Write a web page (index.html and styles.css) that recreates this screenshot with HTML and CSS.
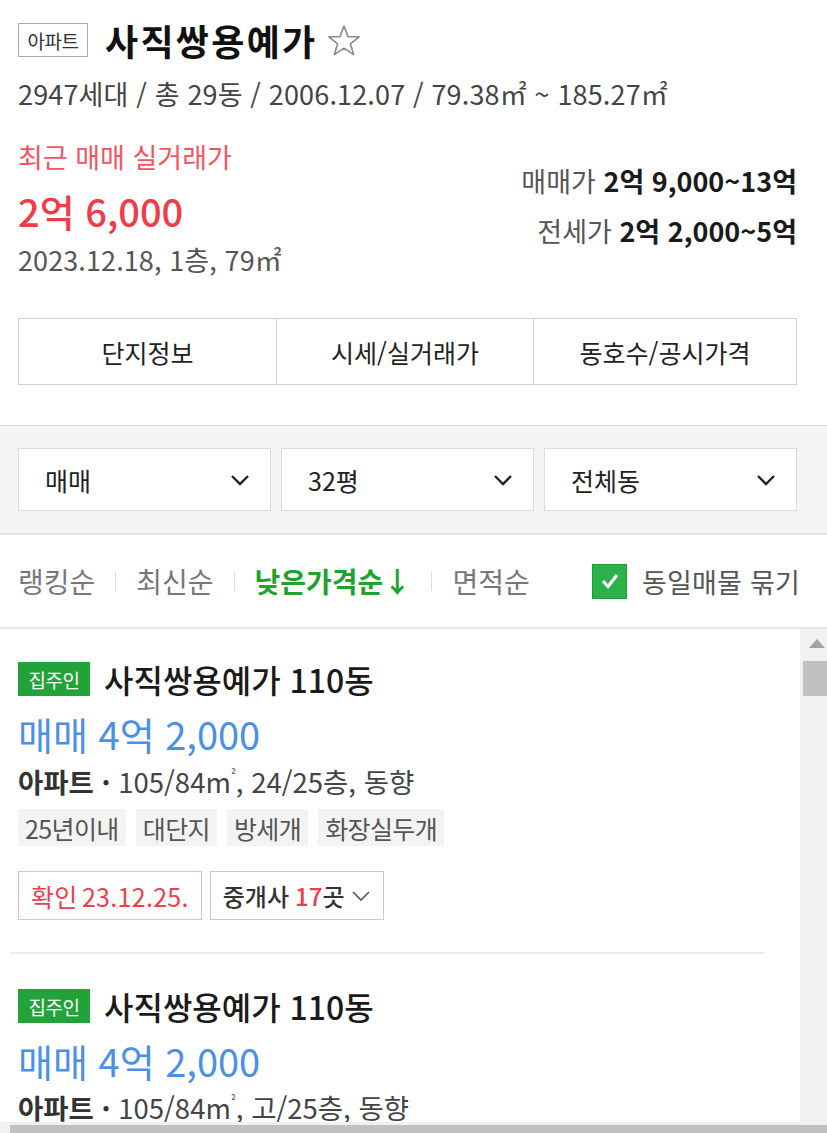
FILE: index.html
```html
<!DOCTYPE html>
<html lang="ko">
<head>
<meta charset="utf-8">
<link rel="stylesheet" href="styles.css">
</head>
<body>
<div class="page">
  <header class="head">
    <div class="title-row">
      <span class="type-badge">아파트</span>
      <h1 class="title">사직쌍용예가</h1>
      <svg class="star" width="34" height="32" viewBox="0 0 34 32"><polygon points="17,2 21,12.6 32.2,12.8 23.4,19.8 26.6,30.6 17,24.2 7.4,30.6 10.6,19.8 1.8,12.8 13,12.6" fill="none" stroke="#8a8a8a" stroke-width="1.6" stroke-linejoin="round"/></svg>
    </div>
    <div class="meta">2947세대 / 총 29동 / 2006.12.07 / 79.38㎡ ~ 185.27㎡</div>
    <div class="price-area">
      <div class="recent">
        <div class="recent-label">최근 매매 실거래가</div>
        <div class="recent-price">2억 6,000</div>
        <div class="recent-date">2023.12.18, 1층, 79㎡</div>
      </div>
      <div class="ranges">
        <div class="range"><span class="range-label">매매가</span> <b>2억 9,000~13억</b></div>
        <div class="range"><span class="range-label">전세가</span> <b>2억 2,000~5억</b></div>
      </div>
    </div>
    <div class="tabs">
      <div class="tab">단지정보</div>
      <div class="tab">시세/실거래가</div>
      <div class="tab">동호수/공시가격</div>
    </div>
  </header>

  <section class="filters">
    <div class="select"><span>매매</span><svg class="chev" width="20" height="12" viewBox="0 0 20 12"><polyline points="2,2 10,10 18,2" fill="none" stroke="#222" stroke-width="2.4"/></svg></div>
    <div class="select"><span>32평</span><svg class="chev" width="20" height="12" viewBox="0 0 20 12"><polyline points="2,2 10,10 18,2" fill="none" stroke="#222" stroke-width="2.4"/></svg></div>
    <div class="select"><span>전체동</span><svg class="chev" width="20" height="12" viewBox="0 0 20 12"><polyline points="2,2 10,10 18,2" fill="none" stroke="#222" stroke-width="2.4"/></svg></div>
  </section>

  <nav class="sortbar">
    <div class="sorts">
      <span class="sort">랭킹순</span>
      <span class="sep"></span>
      <span class="sort">최신순</span>
      <span class="sep"></span>
      <span class="sort active">낮은가격순↓</span>
      <span class="sep"></span>
      <span class="sort">면적순</span>
    </div>
    <label class="group">
      <span class="check"><svg width="22" height="20" viewBox="0 0 22 20"><polyline points="4,10 9,15.5 18,4" fill="none" stroke="#fff" stroke-width="3.2"/></svg></span>
      <span>동일매물 묶기</span>
    </label>
  </nav>

  <div class="list">
    <div class="items">
      <article class="item">
        <div class="item-title"><span class="owner">집주인</span><span class="name">사직쌍용예가 110동</span></div>
        <div class="item-price">매매 4억 2,000</div>
        <div class="item-info"><b>아파트 ·</b> 105/84m<sup>²</sup>, 24/25층, 동향</div>
        <div class="tags">
          <span class="tag">25년이내</span>
          <span class="tag">대단지</span>
          <span class="tag">방세개</span>
          <span class="tag">화장실두개</span>
        </div>
        <div class="actions">
          <span class="confirm">확인 23.12.25.</span>
          <span class="agents">중개사 <em>17</em>곳 <svg width="20" height="12" viewBox="0 0 20 12"><polyline points="2,2 10,10 18,2" fill="none" stroke="#555" stroke-width="1.6"/></svg></span>
        </div>
      </article>
      <article class="item">
        <div class="item-title"><span class="owner">집주인</span><span class="name">사직쌍용예가 110동</span></div>
        <div class="item-price">매매 4억 2,000</div>
        <div class="item-info last"><b>아파트 ·</b> 105/84m<sup>²</sup>, 고/25층, 동향</div>
      </article>
    </div>
    <div class="vscroll">
      <span class="arrow"></span>
      <span class="vthumb"></span>
    </div>
    <div class="hscroll"><span class="hthumb"></span></div>
  </div>
</div>
</body>
</html>
```

FILE: styles.css
```css
* { box-sizing: border-box; }
html, body { margin: 0; padding: 0; background: #fff; }
body {
  font-family: "Noto Sans CJK KR", "Noto Sans", "Liberation Sans", sans-serif;
  color: #222;
  width: 827px;
  height: 1133px;
  overflow: hidden;
}
.page { display: flex; flex-direction: column; height: 1133px; }

.head { padding: 18px 30px 0 18px; }
.title-row { display: flex; align-items: center; height: 44px; }
.type-badge {
  display: inline-flex; align-items: center; justify-content: center;
  height: 34px; width: 70px;
  border: 1px solid #a9a9a9;
  font-size: 19px; color: #333; line-height: 1; letter-spacing: -0.5px;
}
.title { margin: 0 0 0 17px; font-size: 36px; font-weight: 700; line-height: 44px; color: #111; letter-spacing: 2.3px; }
.star { margin-left: 9px; }

.meta { margin-top: 16px; font-size: 27px; line-height: 32px; color: #444; letter-spacing: 0.15px; }

.price-area { display: flex; justify-content: space-between; margin-top: 31px; }
.recent-label { font-size: 27px; line-height: 32px; color: #f5545f; }
.recent-price { margin-top: 16px; font-size: 38px; line-height: 44px; font-weight: 500; color: #f03c48; }
.recent-date { margin-top: 11px; font-size: 27px; line-height: 32px; color: #555; letter-spacing: 0.1px; }
.ranges { display: flex; flex-direction: column; align-items: flex-end; gap: 18px; padding-top: 24px; }
.range { font-size: 27px; line-height: 32px; }
.range-label { color: #555; }
.range b { font-weight: 700; color: #1a1a1a; }

.tabs { display: grid; grid-template-columns: 257px 257px 1fr; margin-top: 42px; border: 1px solid #cfcfcf; height: 67px; }
.tab { display: flex; align-items: center; justify-content: center; font-size: 25px; color: #222; }
.tab + .tab { border-left: 1px solid #cfcfcf; }

.filters {
  margin-top: 40px;
  background: #f4f4f4;
  border-top: 1px solid #dcdcdc;
  border-bottom: 2px solid #e2e2e2;
  padding: 22px 30px 22px 18px;
  display: grid; grid-template-columns: repeat(3, 1fr); gap: 10px;
}
.select {
  height: 63px; background: #fff; border: 1px solid #dcdcdc;
  display: flex; align-items: center; justify-content: space-between;
  padding: 0 20px 0 26px;
  font-size: 25px; color: #222;
}

.sortbar {
  height: 94px;
  border-bottom: 2px solid #e6e6e6;
  padding: 0 27px 0 18px;
  display: flex; align-items: center; justify-content: space-between;
}
.sorts { display: flex; align-items: center; }
.sort { font-size: 28px; color: #777; line-height: 32px; }
.sort.active { color: #1ea32f; font-weight: 700; }
.sep { width: 1px; height: 20px; background: #dedede; margin: 0 20px; }
.group { display: flex; align-items: center; gap: 15px; font-size: 27px; color: #555; letter-spacing: 0.2px; }
.check {
  width: 35px; height: 35px; background: #2db14a; border: 1px solid #1f9c3a;
  display: flex; align-items: center; justify-content: center;
}

.list {
  flex: 1;
  display: grid;
  grid-template-columns: 1fr 27px;
  grid-template-rows: 1fr 11px;
  min-height: 0;
}
.items { overflow: hidden; padding: 0 36px 0 11px; }
.item { padding: 33px 0 32px 7px; border-bottom: 2px solid #ebebeb; }
.item-title { display: flex; align-items: center; height: 34px; }
.owner {
  display: inline-flex; align-items: center; justify-content: center;
  height: 34px; width: 72px; background: #21a33a; color: #fff;
  font-size: 19px; line-height: 1; letter-spacing: -0.5px;
}
.name { margin-left: 14px; font-size: 32px; font-weight: 500; color: #1a1a1a; }
.item-price { margin-top: 16px; font-size: 38px; line-height: 44px; color: #4a8fe8; }
.item-info { margin-top: 9px; font-size: 27.5px; line-height: 32px; color: #444; }
.item-info.last { line-height: 28px; margin-top: 10px; }
.item-info b { font-weight: 700; color: #333; }
.item-info sup { font-size: 12px; vertical-align: 14px; line-height: 0; }
.tags { display: flex; gap: 10px; margin-top: 12px; }
.tag { background: #f3f3f3; height: 37px; padding: 0 7px; display: inline-flex; align-items: center; font-size: 25px; letter-spacing: -0.6px; color: #555; }
.actions { display: flex; gap: 8px; margin-top: 25px; }
.confirm {
  height: 49px; padding: 0 12px; border: 1px solid #ffb4bb; color: #f23b4d;
  display: inline-flex; align-items: center; font-size: 25px; letter-spacing: 0.3px; word-spacing: -3px;
}
.agents {
  height: 49px; padding: 0 12px; border: 1px solid #c9c9c9; color: #333; font-weight: 500;
  display: inline-flex; align-items: center; gap: 6px; font-size: 24px;
}
.agents em { font-style: normal; color: #f23b4d; margin-right: -6px; }
.item + .item { border-bottom: 0; padding-top: 35px; }

.vscroll { background: #f1f1f1; display: flex; flex-direction: column; align-items: flex-end; }
.arrow {
  margin-top: 10px; margin-right: 2px;
  width: 0; height: 0;
  border-left: 8px solid transparent; border-right: 8px solid transparent;
  border-bottom: 9px solid #a3a3a3;
}
.vthumb { margin-top: 13px; width: 24px; height: 35px; background: #c1c1c1; }
.hscroll { grid-column: 1 / 3; background: #f1f1f1; padding: 3px 0 0 10px; }
.hthumb { display: block; height: 8px; background: #c1c1c1; }
```
